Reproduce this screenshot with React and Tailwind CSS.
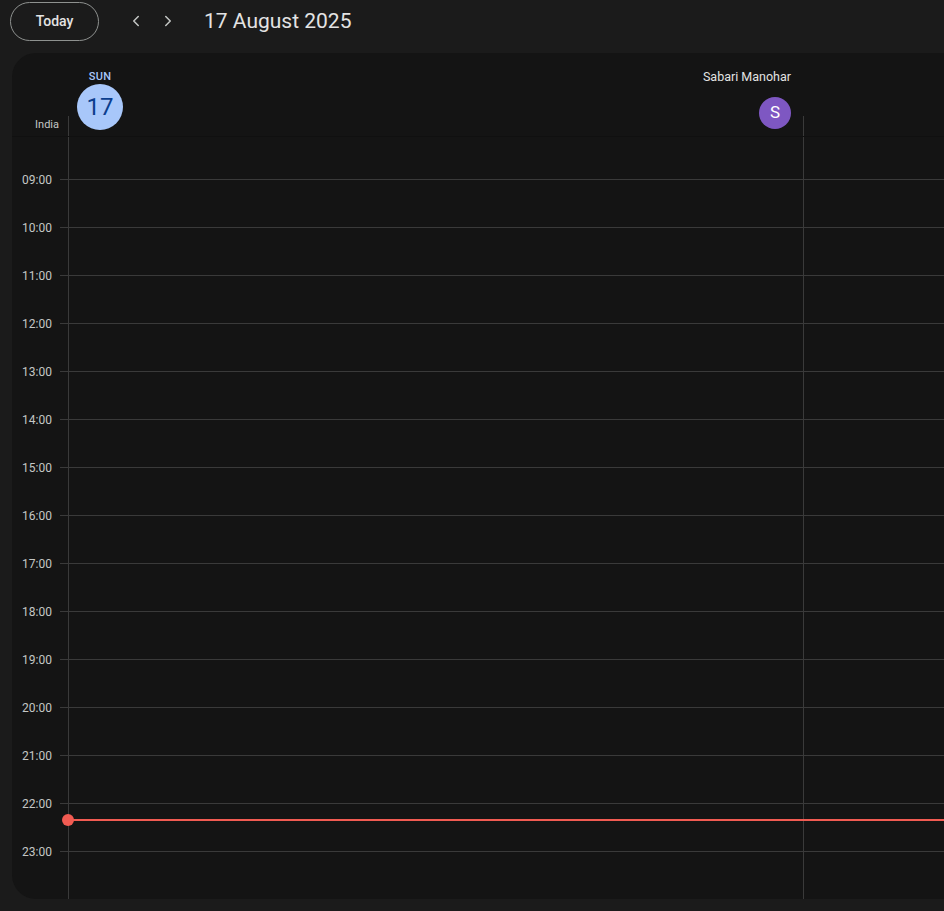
import { ChevronLeft, ChevronRight } from 'lucide-react'

const HOURS = ['09:00', '10:00', '11:00', '12:00', '13:00', '14:00', '15:00', '16:00',
  '17:00', '18:00', '19:00', '20:00', '21:00', '22:00', '23:00']

function HourCells() {
  return (
    <div className="pt-[42px]">
      {HOURS.map((h) => (
        <div key={h} className="h-[48px] border-t border-[#3a3a3a]" />
      ))}
    </div>
  )
}

export default function App() {
  return (
    <div className="h-[911px] w-[944px] overflow-hidden bg-[#1b1b1b] font-['Roboto',sans-serif] text-[#e3e3e3]">
      {/* Top bar */}
      <div className="flex items-center h-[41px] pl-[10px] pt-px">
        <button className="h-[39px] w-[89px] rounded-full border border-[#8e918f] text-sm font-medium text-[#e3e3e3]">
          Today
        </button>
        <div className="flex items-center ml-[28px] gap-[14px] text-[#c4c7c5]">
          <ChevronLeft size={18} strokeWidth={2} />
          <ChevronRight size={18} strokeWidth={2} />
        </div>
        <h1 className="ml-[27px] text-[21px] leading-none text-[#e3e3e3]">17 August 2025</h1>
      </div>

      {/* Calendar panel */}
      <div className="ml-[12px] mt-[12px] w-[960px] h-[846px] rounded-[24px] bg-[#141414] overflow-hidden flex flex-col">
        {/* Header */}
        <div className="flex h-[84px] border-b border-[#101010] shrink-0">
          <div className="w-[56px] flex items-end justify-end pr-[9px] pb-[3px]">
            <span className="text-[11px] text-[#c4c7c5]">India</span>
          </div>
          <div className="relative w-[735px] flex justify-between">
            <div className="absolute left-0 bottom-0 h-[20px] w-px bg-[#3a3a3a]" />
            <div className="flex flex-col items-center pl-[9px] pt-[18px] w-[55px]">
              <span className="text-[11px] font-medium tracking-wide leading-none text-[#a8c7fa]">SUN</span>
              <div className="mt-[2px] w-[46px] h-[46px] rounded-full bg-[#a8c7fa] flex items-center justify-center text-[24px] text-[#0b3e8e]">
                17
              </div>
            </div>
            <div className="flex flex-col items-end pr-[12px] pt-[18px]">
              <span className="text-[12.5px] leading-none text-[#e3e3e3]">Sabari Manohar</span>
              <div className="mt-[13px] w-[32px] h-[32px] rounded-full bg-[#7e57c2] flex items-center justify-center text-[17px] text-white">
                S
              </div>
            </div>
          </div>
          <div className="relative flex-1">
            <div className="absolute left-0 bottom-0 h-[20px] w-px bg-[#3a3a3a]" />
          </div>
        </div>

        {/* Body */}
        <div className="relative flex flex-1">
          <div className="w-[56px] pt-[42px]">
            {HOURS.map((h) => (
              <div key={h} className="h-[48px] flex items-start justify-end">
                <span className="text-[12px] leading-none -mt-[5px] mr-[8px] text-[#c4c7c5]">{h}</span>
                <div className="w-[8px] border-t border-[#3a3a3a]" />
              </div>
            ))}
          </div>
          <div className="w-[735px] border-l border-[#3a3a3a]">
            <HourCells />
          </div>
          <div className="flex-1 border-l border-[#3a3a3a]">
            <HourCells />
          </div>

          {/* Now indicator */}
          <div className="absolute left-[56px] right-0 top-[682px] h-[2px] bg-[#f15b52]">
            <div className="absolute -left-[6px] -top-[5px] w-[12px] h-[12px] rounded-full bg-[#f15b52]" />
          </div>
        </div>
      </div>
    </div>
  )
}
